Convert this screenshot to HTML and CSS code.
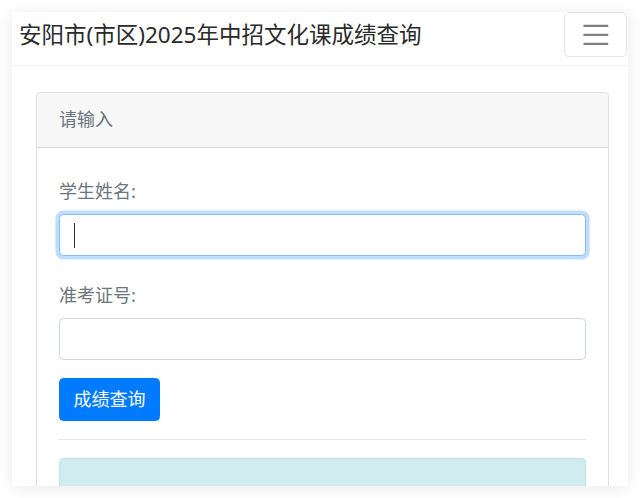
FILE: index.html
```html
<!DOCTYPE html>
<html lang="zh-CN">
<head>
<meta charset="utf-8">
<title>安阳市(市区)2025年中招文化课成绩查询</title>
<link rel="stylesheet" href="styles.css">
</head>
<body>
<div class="frame">
  <nav class="navbar">
    <span class="brand">安阳市(市区)2025年中招文化课成绩查询</span>
    <button class="toggler" type="button" aria-label="菜单">
      <svg class="toggler-icon" viewBox="0 0 30 30" width="34" height="34"><path d="M4 7h22M4 15h22M4 23h22" stroke="rgba(0,0,0,0.5)" stroke-width="2" stroke-linecap="butt" fill="none"/></svg>
    </button>
  </nav>
  <main class="content">
    <div class="card">
      <div class="card-header">请输入</div>
      <div class="card-body">
        <form class="query-form">
          <div class="form-group">
            <label class="form-label" for="xm">学生姓名:</label>
            <div class="input-wrap">
              <input id="xm" class="form-control is-focused" type="text">
              <span class="fake-caret"></span>
            </div>
          </div>
          <div class="form-group">
            <label class="form-label" for="zkzh">准考证号:</label>
            <input id="zkzh" class="form-control" type="text">
          </div>
          <button class="btn-primary" type="button">成绩查询</button>
        </form>
        <hr class="divider">
        <div class="alert-info"></div>
      </div>
    </div>
  </main>
</div>
</body>
</html>
```
FILE: styles.css
```css
html {
  font-size: 18px;
}
body {
  margin: 0;
  background: #ffffff;
  font-family: "Noto Sans", "Noto Sans CJK SC", sans-serif;
  color: #212529;
  line-height: 1.5;
}
.frame {
  margin: 12px;
  width: 616px;
  height: 474px;
  overflow: hidden;
  background: #ffffff;
  box-shadow: 0 2px 14px rgba(0, 0, 0, 0.09);
}
.navbar {
  display: flex;
  justify-content: space-between;
  align-items: flex-start;
  padding: 0 1px 8px 7px;
  border-bottom: 1px solid #f1f1f1;
}
.brand {
  font-size: 22.5px;
  line-height: 33.75px;
  padding: 5.6px 0;
  color: #2a2a2a;
  white-space: nowrap;
}
.toggler {
  display: flex;
  align-items: center;
  justify-content: center;
  padding: 4.5px 13.5px;
  background: transparent;
  border: 1px solid rgba(0, 0, 0, 0.1);
  border-radius: 4.5px;
  margin: 0;
}
.toggler-icon {
  display: block;
  width: 33.75px;
  height: 33.75px;
}
.content {
  padding: 26px 19px 0 23.5px;
}
.card {
  border: 1px solid rgba(0, 0, 0, 0.125);
  border-radius: 4.5px;
  background: #fff;
}
.card-header {
  padding: 13.5px 22.5px;
  background: #f7f7f7;
  border-bottom: 1px solid rgba(0, 0, 0, 0.125);
  border-radius: 4.5px 4.5px 0 0;
  color: #6c757d;
  font-size: 18px;
  line-height: 27px;
}
.card-body {
  padding: 22.5px;
}
.form-group {
  margin-bottom: 18px;
}
.form-label {
  display: block;
  margin: 0 0 9px;
  padding-top: 7.5px;
  font-size: 18px;
  line-height: 27px;
  color: #6c757d;
}
.input-wrap {
  position: relative;
}
.form-control {
  display: block;
  box-sizing: border-box;
  width: 100%;
  height: 42.5px;
  margin: 0;
  padding: 6.75px 13.5px;
  font-family: inherit;
  font-size: 18px;
  line-height: 27px;
  color: #495057;
  background: #fff;
  border: 1px solid #ced4da;
  border-radius: 4.5px;
  outline: none;
}
.form-control.is-focused {
  border-color: #80bdff;
  box-shadow: 0 0 0 3.6px rgba(0, 123, 255, 0.25);
  caret-color: transparent;
}
.fake-caret {
  position: absolute;
  left: 14.5px;
  top: 9px;
  width: 1px;
  height: 25px;
  background: #333;
}
.btn-primary {
  display: inline-block;
  box-sizing: border-box;
  height: 42.5px;
  padding: 6.75px 13.5px;
  font-family: inherit;
  font-size: 18px;
  line-height: 27px;
  color: #fff;
  background: #007bff;
  border: 1px solid #007bff;
  border-radius: 4.5px;
}
.divider {
  margin: 18px 0;
  border: 0;
  border-top: 1px solid rgba(0, 0, 0, 0.1);
}
.alert-info {
  height: 60px;
  background: #d1ecf1;
  border: 1px solid #bee5eb;
  border-radius: 4.5px;
}
```
